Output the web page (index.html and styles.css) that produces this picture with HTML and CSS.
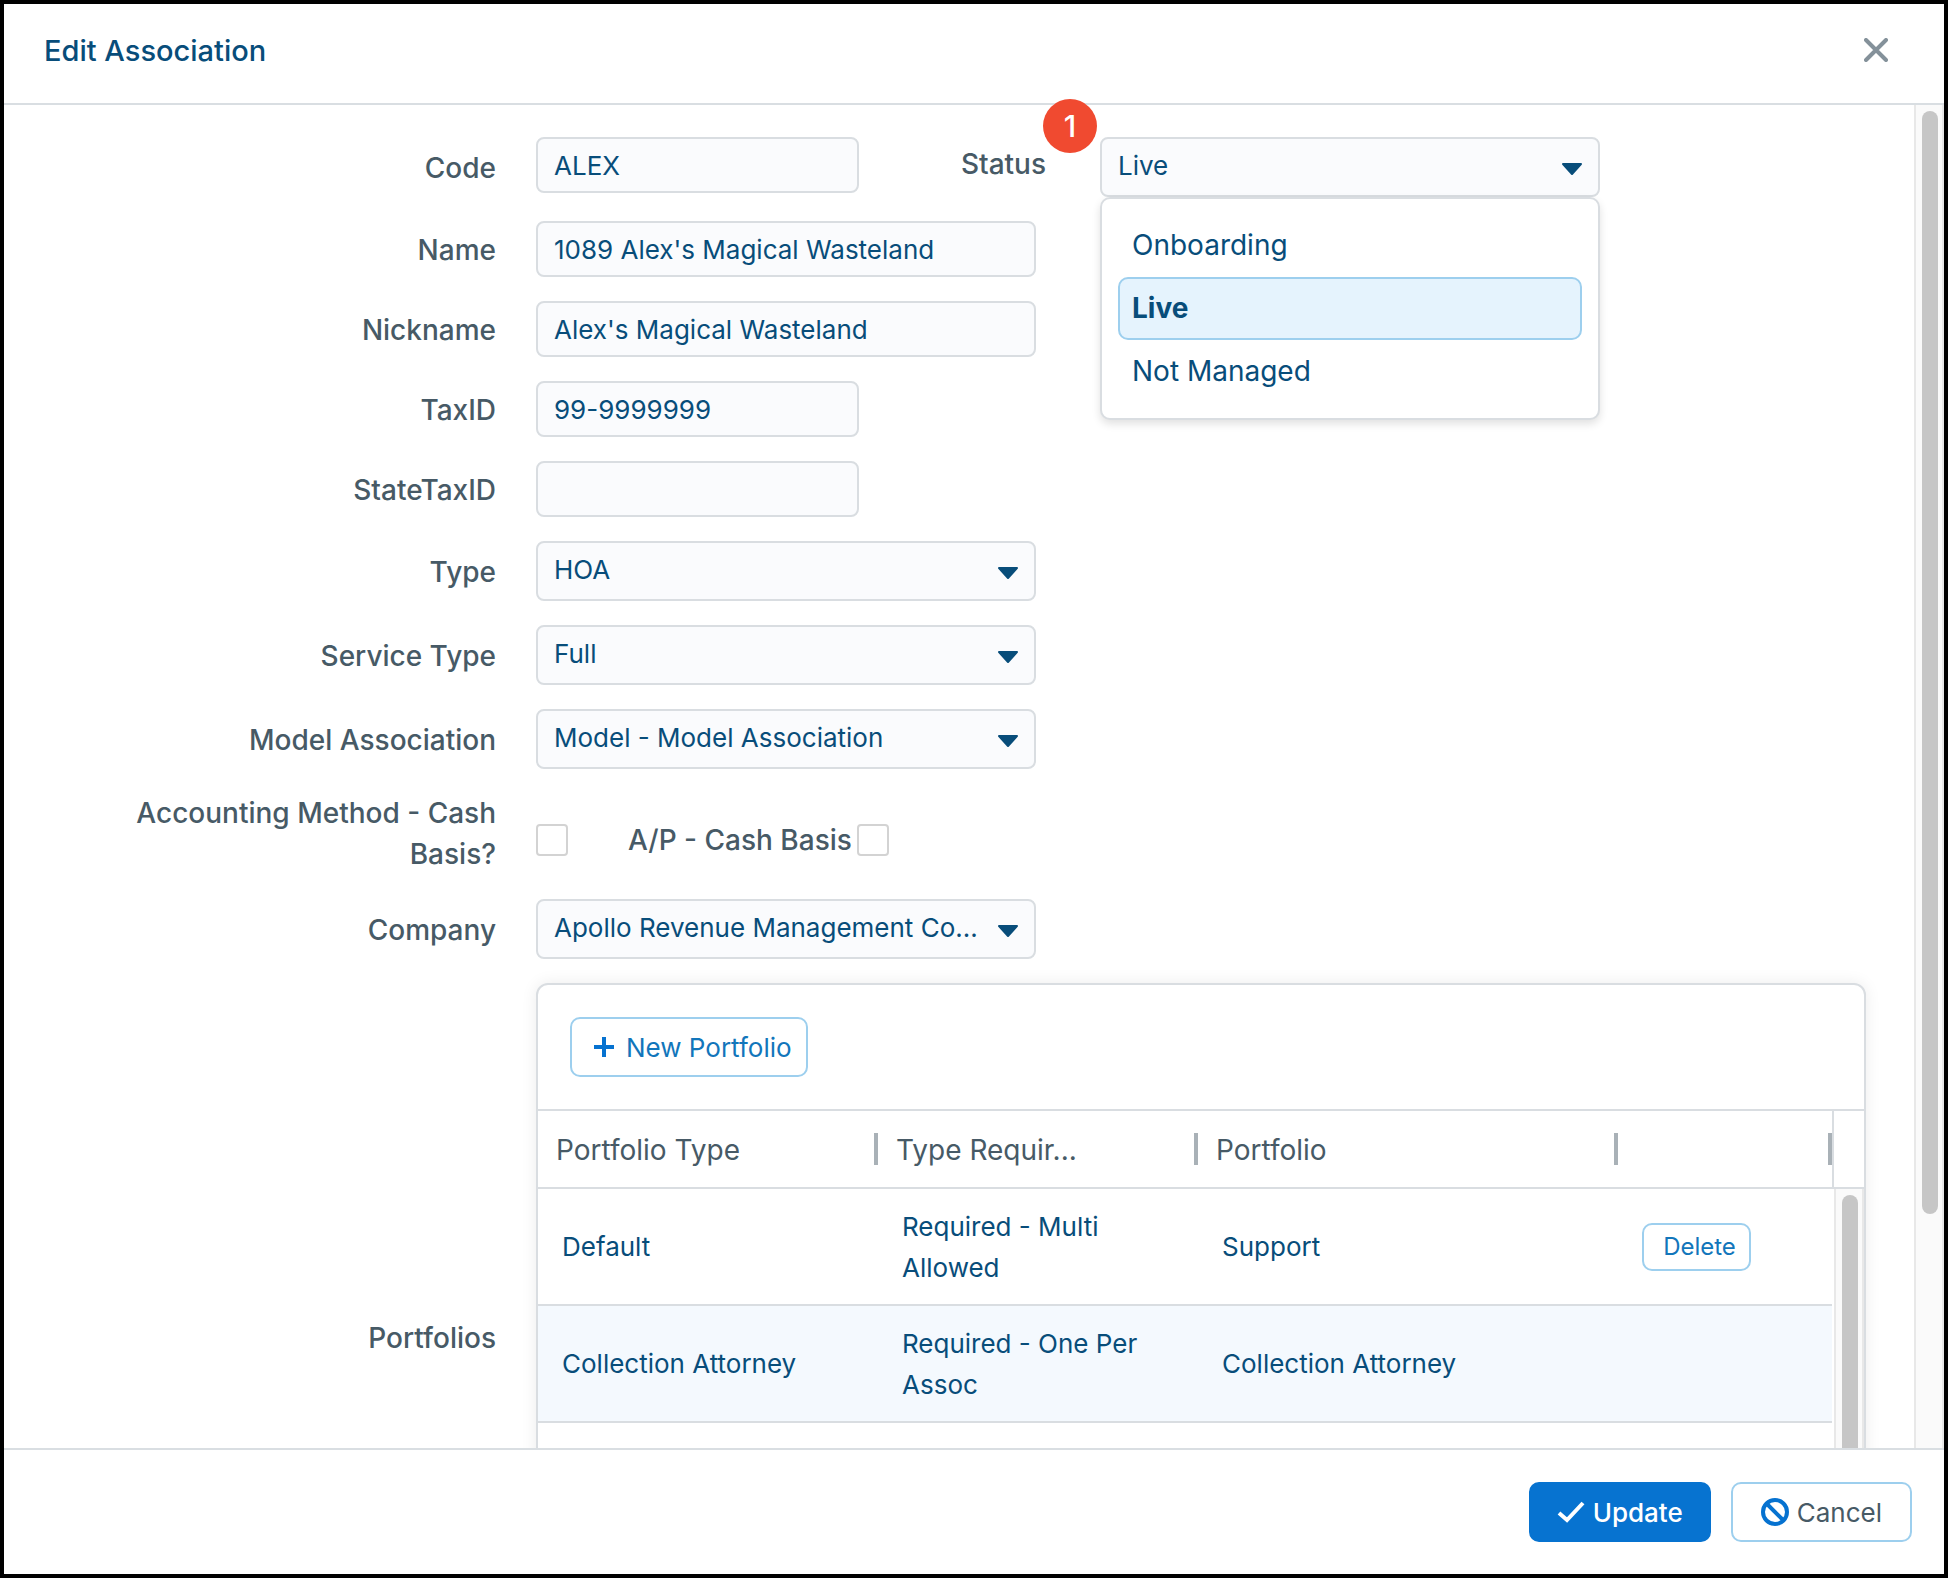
FILE: index.html
```html
<!DOCTYPE html>
<html lang="en">
<head>
    <meta charset="UTF-8">
    <meta name="viewport" content="width=device-width, initial-scale=1.0">
    <title>Edit Association</title>
    <link rel="stylesheet" href="styles.css">
</head>
<body>
    <div class="dialog" role="dialog" aria-labelledby="dialog-title">
        <header class="dialog-header">
            <h1 id="dialog-title">Edit Association</h1>
            <button class="close-btn" type="button" aria-label="Close">
                <svg width="24" height="24" viewBox="0 0 24 24"><path d="M2 2L22 22M22 2L2 22"/></svg>
            </button>
        </header>

        <div class="dialog-body">
            <form class="form" id="association-form">
                <label class="label" for="code">Code</label>
                <div class="field field-top">
                    <input class="input short" id="code" type="text" value="ALEX">
                    <label class="label status-label" for="status">Status</label>
                    <div class="select-wrap">
                        <select class="select" id="status">
                            <option>Onboarding</option>
                            <option selected>Live</option>
                            <option>Not Managed</option>
                        </select>
                        <svg class="caret" width="22" height="14" viewBox="0 0 22 14"><path d="M2 2H20L11 12Z"/></svg>
                        <!-- Open status list -->
                        <ul class="menu" role="listbox" aria-label="Status options">
                            <li class="menu-item" role="option">Onboarding</li>
                            <li class="menu-item active" role="option" aria-selected="true">Live</li>
                            <li class="menu-item" role="option">Not Managed</li>
                        </ul>
                    </div>
                </div>

                <label class="label" for="name">Name</label>
                <div class="field"><input class="input" id="name" type="text" value="1089 Alex's Magical Wasteland"></div>

                <label class="label" for="nickname">Nickname</label>
                <div class="field"><input class="input" id="nickname" type="text" value="Alex's Magical Wasteland"></div>

                <label class="label" for="tax-id">TaxID</label>
                <div class="field"><input class="input short" id="tax-id" type="text" value="99-9999999"></div>

                <label class="label" for="state-tax-id">StateTaxID</label>
                <div class="field"><input class="input short" id="state-tax-id" type="text"></div>

                <label class="label" for="type">Type</label>
                <div class="field">
                    <div class="select-wrap">
                        <select class="select" id="type"><option>HOA</option></select>
                        <svg class="caret" width="22" height="14" viewBox="0 0 22 14"><path d="M2 2H20L11 12Z"/></svg>
                    </div>
                </div>

                <label class="label" for="service-type">Service Type</label>
                <div class="field">
                    <div class="select-wrap">
                        <select class="select" id="service-type"><option>Full</option></select>
                        <svg class="caret" width="22" height="14" viewBox="0 0 22 14"><path d="M2 2H20L11 12Z"/></svg>
                    </div>
                </div>

                <label class="label" for="model">Model Association</label>
                <div class="field">
                    <div class="select-wrap">
                        <select class="select" id="model"><option>Model - Model Association</option></select>
                        <svg class="caret" width="22" height="14" viewBox="0 0 22 14"><path d="M2 2H20L11 12Z"/></svg>
                    </div>
                </div>

                <label class="label label-wrap" for="cash-basis">Accounting Method - Cash Basis?</label>
                <div class="field checks">
                    <input class="checkbox" id="cash-basis" type="checkbox">
                    <label class="label ap-label" for="ap-cash-basis">A/P - Cash Basis</label>
                    <input class="checkbox" id="ap-cash-basis" type="checkbox">
                </div>

                <label class="label" for="company">Company</label>
                <div class="field">
                    <div class="select-wrap">
                        <select class="select" id="company"><option>Apollo Revenue Management Co...</option></select>
                        <svg class="caret" width="22" height="14" viewBox="0 0 22 14"><path d="M2 2H20L11 12Z"/></svg>
                    </div>
                </div>

                <div class="label" id="portfolios-label">Portfolios</div>
                <section class="panel" aria-labelledby="portfolios-label">
                    <div class="panel-toolbar">
                        <button class="btn btn-outline btn-new" type="button">
                            <svg width="20" height="20" viewBox="0 0 20 20"><path d="M10 0V20M0 10H20"/></svg>
                            New Portfolio
                        </button>
                    </div>
                    <div class="grid">
                        <table class="grid-table">
                            <colgroup>
                                <col class="col-type">
                                <col class="col-required">
                                <col class="col-portfolio">
                                <col>
                            </colgroup>
                            <thead>
                                <tr>
                                    <th><div class="th-inner">Portfolio Type</div></th>
                                    <th><div class="th-inner">Type Requir...</div></th>
                                    <th><div class="th-inner">Portfolio</div></th>
                                    <th><div class="th-inner"></div></th>
                                </tr>
                            </thead>
                            <tbody>
                                <tr>
                                    <td>Default</td>
                                    <td>Required - Multi Allowed</td>
                                    <td>Support</td>
                                    <td><button class="btn btn-outline btn-delete" type="button">Delete</button></td>
                                </tr>
                                <tr class="alt">
                                    <td>Collection Attorney</td>
                                    <td>Required - One Per Assoc</td>
                                    <td>Collection Attorney</td>
                                    <td></td>
                                </tr>
                                <tr>
                                    <td></td>
                                    <td></td>
                                    <td></td>
                                    <td></td>
                                </tr>
                            </tbody>
                        </table>
                        <div class="grid-side">
                            <div class="grid-corner"></div>
                            <div class="track"><div class="thumb thumb-grid"></div></div>
                        </div>
                    </div>
                </section>
            </form>
            <div class="track"><div class="thumb thumb-body"></div></div>
        </div>

        <footer class="dialog-footer">
            <button class="btn btn-primary" type="submit" form="association-form">
                <svg width="28" height="22" viewBox="0 0 28 22"><path d="M2 12L10 19L26 2"/></svg>
                Update
            </button>
            <button class="btn btn-outline btn-cancel" type="button">
                <svg width="28" height="28" viewBox="0 0 28 28"><circle cx="14" cy="14" r="12"/><path d="M5.500 5.500L22.500 22.500"/></svg>
                Cancel
            </button>
        </footer>

        <span class="badge">1</span>
    </div>
</body>
</html>
```
FILE: styles.css
```css
* {
    box-sizing: border-box;
}

body {
    margin: 0;
    background-color: #8a8a8a;
    font-family: Inter, "Liberation Sans", sans-serif;
    font-size: 26px;
    line-height: 41px;
    color: #084d7a;
}

input,
select,
button {
    font: inherit;
    color: inherit;
}

.dialog {
    position: relative;
    display: flex;
    flex-direction: column;
    height: 100vh;
    border: 4px solid black;
    background-color: white;
    overflow: hidden;
}

/* Header */
.dialog-header {
    display: flex;
    justify-content: space-between;
    align-items: center;
    height: 101px;
    padding: 0 56px 7px 40px;
    border-bottom: 2px solid #d9dee2;
}

h1 {
    margin: 0;
    font-size: 29px;
    font-weight: 500;
}

.close-btn {
    display: flex;
    padding: 0;
    border: none;
    background: none;
}

.close-btn svg {
    fill: none;
    stroke: #84919a;
    stroke-width: 4;
    stroke-linecap: round;
}

/* Body */
.dialog-body {
    display: flex;
    flex: 1;
    min-height: 0;
    overflow: hidden;
}

.form {
    flex: 1;
    display: grid;
    grid-template-columns: 380px 1fr;
    column-gap: 40px;
    row-gap: 24px;
    align-content: start;
    padding: 32px 48px 0 112px;
}

.label {
    align-self: center;
    padding-top: 2px;
    text-align: right;
    font-size: 28px;
    font-weight: 500;
    color: #475a66;
}

.field {
    display: flex;
    align-items: center;
}

.field-top {
    align-items: flex-start;
}

.input {
    width: 500px;
    height: 56px;
    padding: 0 16px;
    border: 2px solid #d9dde1;
    border-radius: 8px;
    background-color: #fafbfd;
}

.short {
    width: 323px;
}

.status-label {
    width: 187px;
    margin-right: 54px;
    align-self: flex-start;
    padding-top: 7px;
}

.select-wrap {
    position: relative;
    width: 500px;
}

.select {
    display: block;
    appearance: none;
    width: 100%;
    height: 60px;
    padding: 0 48px 3px 16px;
    border: 2px solid #d9dde1;
    border-radius: 8px;
    background-color: #fafbfd;
}

.caret {
    position: absolute;
    top: 25px;
    right: 17px;
    fill: #084d7a;
    stroke: #084d7a;
    stroke-width: 2;
    stroke-linejoin: round;
    pointer-events: none;
}

.menu {
    position: absolute;
    top: 60px;
    left: 0;
    z-index: 2;
    width: 100%;
    margin: 0;
    padding: 15px 16px;
    list-style: none;
    border: 2px solid #d9dde1;
    border-radius: 10px;
    background-color: white;
    box-shadow: 0 4px 8px rgba(0, 0, 0, 0.12);
}

.menu-item {
    padding: 9px 12px;
    border: 2px solid transparent;
    border-radius: 10px;
    font-size: 28px;
}

.menu-item.active {
    border-color: #9dcfee;
    background-color: #e5f3fd;
    font-weight: 700;
}

.label-wrap {
    padding-top: 0;
}

.checks {
    padding-top: 12px;
}

.checkbox {
    appearance: none;
    width: 32px;
    height: 32px;
    margin: 0;
    border: 2px solid #d3d3d3;
    border-radius: 4px;
    background-color: white;
}

.ap-label {
    margin: 0 5px 0 60px;
    padding-top: 0;
}

/* Portfolios */
.panel {
    height: 708px;
    border: 2px solid #d9dde1;
    border-radius: 12px;
    background-color: white;
    box-shadow: 0 0 16px rgba(0, 0, 0, 0.08);
    overflow: hidden;
}

.panel-toolbar {
    display: flex;
    height: 126px;
    padding: 32px;
    border-bottom: 2px solid #d9dde1;
}

.btn {
    display: flex;
    align-items: center;
    justify-content: center;
    height: 60px;
    border: 2px solid #9dcfee;
    border-radius: 10px;
    white-space: nowrap;
}

.btn svg {
    fill: none;
    stroke: #0672d0;
    stroke-width: 4;
}

.btn-outline {
    background-color: white;
    color: #1276bb;
}

.btn-new {
    gap: 12px;
    padding: 0 14px 0 22px;
}

.btn-delete {
    width: 109px;
    height: 48px;
    padding: 0 0 0 6px;
    font-size: 24px;
}

.grid {
    display: flex;
    height: 578px;
}

.grid-table {
    flex: 1;
    align-self: flex-start;
    table-layout: fixed;
    border-spacing: 0;
}

.col-type {
    width: 340px;
}

.col-required {
    width: 320px;
}

.col-portfolio {
    width: 420px;
}

.grid-table th {
    height: 78px;
    padding: 0;
    border-bottom: 2px solid #d9dde1;
    text-align: left;
    font-size: 28px;
    font-weight: 400;
    line-height: 34px;
    color: #475a66;
}

.th-inner {
    height: 32px;
    padding-left: 18px;
    border-right: 4px solid #a9b1b7;
}

.grid-table td {
    height: 117px;
    padding: 0 60px 0 24px;
    border-bottom: 2px solid #d9dde1;
}

.grid-table td:first-child,
.grid-table td:last-child {
    padding-right: 0;
}

.grid-table .alt td {
    background-color: #f4f9fe;
}

.grid-side {
    display: flex;
    flex-direction: column;
    width: 32px;
}

.grid-corner {
    height: 78px;
    border-left: 2px solid #d9dde1;
    border-bottom: 2px solid #d9dde1;
}

.track {
    flex: none;
    width: 30px;
    padding: 6px;
    border: solid #e8e8e8;
    border-width: 0 2px;
    background-color: #fafafa;
}

.grid-side .track {
    flex: 1;
    align-self: flex-end;
}

.thumb {
    width: 16px;
    border-radius: 8px;
    background-color: #c6c6c6;
}

.thumb-body {
    height: 1103px;
}

.thumb-grid {
    height: 380px;
}

/* Footer */
.dialog-footer {
    display: flex;
    justify-content: flex-end;
    align-items: center;
    gap: 20px;
    height: 126px;
    padding: 0 32px;
    border-top: 2px solid #d9dee2;
}

.btn-primary {
    gap: 8px;
    padding: 0 26px;
    border-color: #0773d0;
    background-color: #0773d0;
    color: white;
    font-weight: 500;
}

.btn-primary svg {
    stroke: white;
}

.btn-cancel {
    gap: 8px;
    padding: 0 28px;
    color: #475a66;
}

.badge {
    position: absolute;
    top: 95px;
    left: 1039px;
    z-index: 3;
    width: 54px;
    height: 54px;
    border-radius: 50%;
    background-color: #f04a30;
    color: white;
    font-size: 30px;
    font-weight: 500;
    line-height: 54px;
    text-align: center;
}
```
